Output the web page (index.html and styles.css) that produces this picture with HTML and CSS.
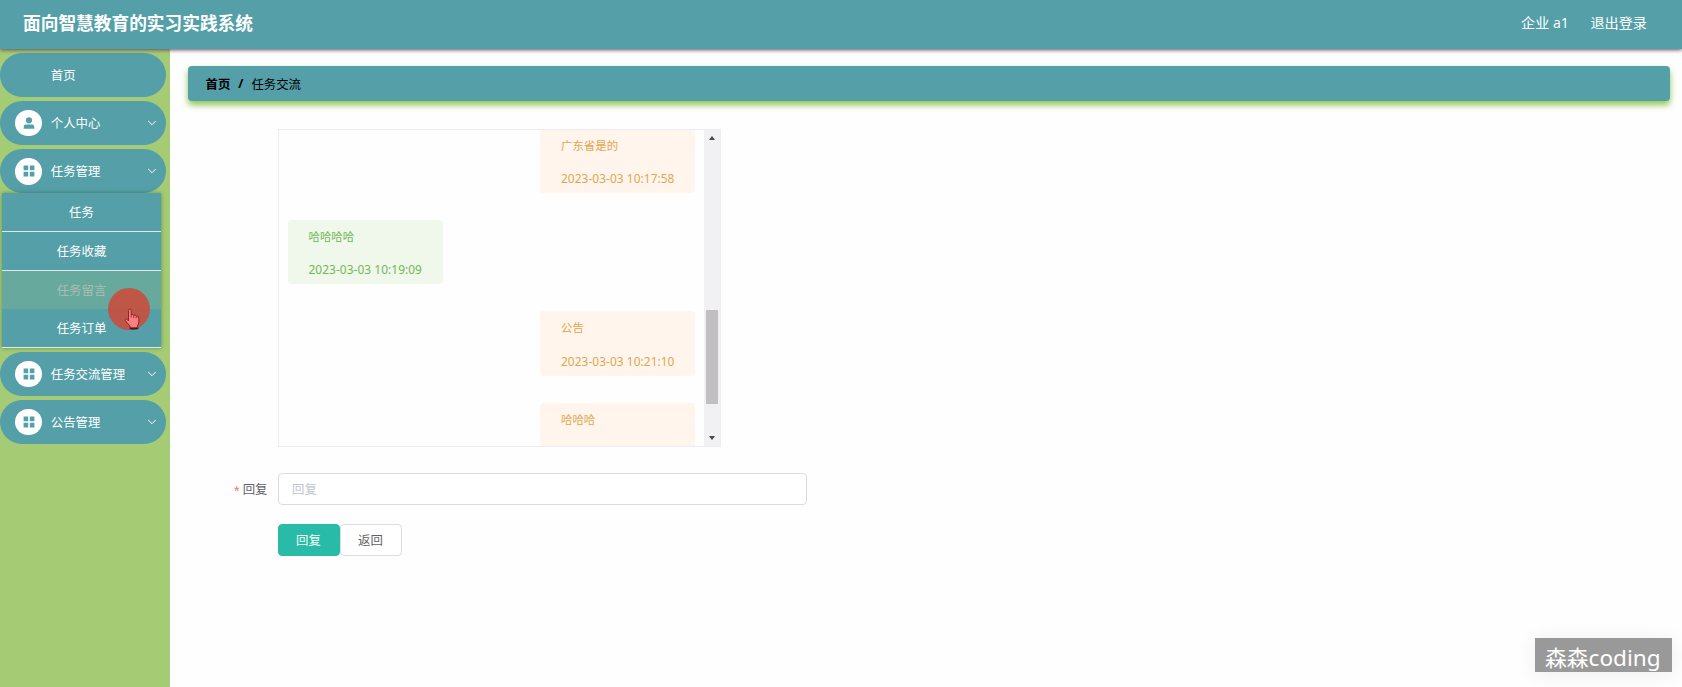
FILE: index.html
```html
<!DOCTYPE html>
<html lang="zh-CN">
<head>
<meta charset="utf-8">
<title>面向智慧教育的实习实践系统</title>
<link rel="stylesheet" href="styles.css">
</head>
<body>
<svg class="defs" width="0" height="0">
  <symbol id="grid" viewBox="0 0 12 12"><path d="M0.6 0.6h4.6v4.6H0.6zM6.8 0.6h4.6v4.6H6.8zM0.6 6.8h4.6v4.6H0.6zM6.8 6.8h4.6v4.6H6.8z"/></symbol>
  <symbol id="user" viewBox="0 0 12 12"><circle cx="6" cy="3.3" r="3.1"/><path d="M0.7 11.7V10Q0.7 7.6 3.1 7.6H8.9Q11.3 7.6 11.3 10V11.7Z"/></symbol>
  <symbol id="down" viewBox="0 0 10 6"><path d="M1.2 0.9L5 4.7L8.8 0.9" fill="none" stroke="currentColor" stroke-width="1"/></symbol>
</svg>
<header class="header">
  <h1 class="title">面向智慧教育的实习实践系统</h1>
  <nav class="account"><span>企业 a1</span><span>退出登录</span></nav>
</header>
<div class="body">
  <aside class="sidebar">
    <div class="item"><span class="label home">首页</span></div>
    <div class="item"><span class="icon"><svg><use href="#user"/></svg></span><span class="label">个人中心</span><svg class="arrow"><use href="#down"/></svg></div>
    <div class="item open"><span class="icon"><svg><use href="#grid"/></svg></span><span class="label">任务管理</span><svg class="arrow"><use href="#down"/></svg></div>
    <ul class="submenu">
      <li>任务</li>
      <li>任务收藏</li>
      <li class="hover">任务留言</li>
      <li>任务订单</li>
    </ul>
    <div class="item"><span class="icon"><svg><use href="#grid"/></svg></span><span class="label">任务交流管理</span><svg class="arrow"><use href="#down"/></svg></div>
    <div class="item"><span class="icon"><svg><use href="#grid"/></svg></span><span class="label">公告管理</span><svg class="arrow"><use href="#down"/></svg></div>
  </aside>
  <main class="main">
    <div class="breadcrumb"><b>首页</b><b class="slash">/</b><span>任务交流</span></div>
    <div class="chat">
      <div class="messages">
        <div class="message mine first"><p>广东省是的</p><p><span class="date">2023-03-03 10:17:58</span></p></div>
        <div class="message other"><p>哈哈哈哈</p><p><span class="date">2023-03-03 10:19:09</span></p></div>
        <div class="message mine"><p>公告</p><p><span class="date">2023-03-03 10:21:10</span></p></div>
        <div class="message mine"><p>哈哈哈</p><p>&nbsp;</p></div>
      </div>
      <div class="scrollbar"><i class="up"></i><i class="thumb"></i><i class="dn"></i></div>
    </div>
    <div class="field"><label><em>*</em>回复</label><div class="input">回复</div></div>
    <div class="buttons"><button class="btn primary">回复</button><button class="btn">返回</button></div>
  </main>
</div>
<div class="pointer">
  <svg width="16" height="22" viewBox="0 0 16 22"><ellipse cx="10" cy="20" rx="4.5" ry="1.6" fill="#2a1a1c"/><path d="M4.5 13V2.4Q4.5 1 5.8 1Q7.2 1 7.2 2.4V6.6Q9 6 9.7 7.2Q11.5 6.6 12.2 8Q14.8 7.6 14.8 10V14Q14.8 16.5 13.4 18V19.8H6.2V18.2L1.4 12.8Q0.6 11.4 1.7 10.8Q2.9 10.4 4.5 13Z" fill="#fa7f80" stroke="#8c2426" stroke-width="1"/><path d="M7.2 6.6V9.5M9.7 7.4V10M12.2 8.2V10.5" stroke="#8c2426" stroke-width=".8"/></svg>
</div>
<div class="watermark">森森<span>coding</span></div>
</body>
</html>
```
FILE: styles.css
```css
* { box-sizing: border-box; }
body {
  margin: 0;
  height: 687px;
  overflow: hidden;
  display: flex;
  flex-direction: column;
  background: #fefefe;
  font-family: "Open Sans", "Noto Sans CJK SC", sans-serif;
  font-size: 12.4px;
  color: #606266;
}
.defs { position: absolute; }
.header {
  flex: none;
  height: 49px;
  padding: 0 35px 3px 23px;
  display: flex;
  align-items: center;
  justify-content: space-between;
  background: #549fa8;
  color: #fff;
  box-shadow: 0 1px 4px #624b5c;
  z-index: 2;
}
.title { margin: 0; font-size: 17.7px; line-height: 26px; font-weight: 700; }
.account { display: flex; gap: 21.5px; font-size: 14.15px; line-height: 20px; }
.body { flex: 1; display: flex; min-height: 0; }
.sidebar {
  flex: none;
  width: 170px;
  padding-top: 4px;
  background: #a5cc74;
}
.item {
  width: 165.5px;
  height: 44px;
  margin-bottom: 4.2px;
  padding: 0 9px 0 15.3px;
  border-radius: 22px;
  display: flex;
  align-items: center;
  background: #549fa8;
  color: #fff;
}
.item.open { margin-bottom: 0; }
.icon {
  width: 26.5px;
  height: 26.5px;
  margin-right: 9px;
  border-radius: 50%;
  background: #fff;
  color: #549fa8;
  display: flex;
  align-items: center;
  justify-content: center;
}
.icon svg { width: 12px; height: 12px; fill: currentColor; }
.label { flex: 1; padding-top: 1px; line-height: 20px; }
.home { padding-left: 35.5px; }
.arrow { width: 10px; height: 6px; }
.submenu {
  list-style: none;
  width: 159px;
  margin: 0 0 4.3px 2px;
  padding: 0;
  box-shadow: 0 0 4px rgba(50, 90, 60, .6);
  color: #fff;
}
.submenu li {
  height: 38.6px;
  line-height: 39px;
  text-align: center;
  background: #549fa8;
  border-bottom: 1.5px solid #dcebea;
}
.submenu .hover { background: #67a99c; border-color: #67a99c; color: #acbdb5; }
.main { flex: 1; padding: 17px 12px 0 18px; }
.breadcrumb {
  height: 35px;
  padding-left: 17.5px;
  display: flex;
  align-items: center;
  border-radius: 4px;
  background: #549fa8;
  box-shadow: 0 4px 6px #91c655;
  color: #000;
}
.slash { margin: 0 8px; }
.chat {
  width: 443px;
  height: 318px;
  margin: 28px 0 0 89.5px;
  display: flex;
  overflow: hidden;
  border: 1px solid #ededf0;
}
.messages {
  flex: 1;
  padding: 0 9px;
  display: flex;
  flex-direction: column;
  gap: 27px;
}
.message {
  flex: none;
  width: 155px;
  height: 64.3px;
  padding-left: 21px;
  border-radius: 4px;
  font-size: 11.45px;
}
.message.first { margin-top: -1.3px; }
.message p { margin: 0; height: 32.3px; line-height: 34.6px; white-space: nowrap; }
.mine { align-self: flex-end; background: #fff5ec; color: #e3a550; }
.other { background: #f0f7eb; color: #70b956; }
.date { font-family: "Noto Sans", sans-serif; font-size: 11.9px; letter-spacing: .06px; }
.scrollbar {
  width: 15.5px;
  display: flex;
  flex-direction: column;
  align-items: center;
  background: #f1f0f3;
}
.up, .dn { border: 3.5px solid transparent; }
.up { margin-top: 3px; border-bottom: 4px solid #45454a; border-top-width: 3px; }
.thumb { width: 12px; height: 94px; margin-top: 170px; background: #c1bfc2; }
.dn { margin-top: auto; margin-bottom: 3px; border-top: 4px solid #45454a; }
.field { display: flex; margin-top: 26px; }
.field label { width: 89.5px; padding-right: 10px; text-align: right; line-height: 33px; }
.field em { margin-right: 3px; font-size: 11px; font-style: normal; color: #f56c6c; }
.input {
  width: 529.5px;
  height: 32px;
  padding-left: 13.5px;
  border: 1px solid #dcdcde;
  border-radius: 4px;
  background: #fff;
  line-height: 31px;
  color: #c0c4cc;
}
.buttons { display: flex; margin: 18px 0 0 89.5px; }
.btn {
  width: 62px;
  height: 32px;
  padding: 0;
  border: 1px solid #dcdcde;
  border-radius: 4px;
  background: #fff;
  font: inherit;
  color: #606266;
}
.primary { background: #28bba8; border-color: #28bba8; color: #fff; }
.pointer {
  position: absolute;
  left: 108px;
  top: 287.5px;
  width: 42px;
  height: 42px;
  border-radius: 50%;
  background: rgba(204, 75, 58, .88);
  z-index: 3;
}
.pointer svg { position: absolute; left: 16px; top: 20.5px; }
.watermark {
  position: absolute;
  left: 1535px;
  top: 638px;
  width: 137px;
  height: 34px;
  padding-left: 10px;
  background: #999;
  box-shadow: 0 2px 22px rgba(0, 0, 0, .07);
  color: #fff;
  font-family: "Noto Sans", "Noto Sans CJK SC", sans-serif;
  font-size: 21.8px;
  line-height: 39px;
  white-space: nowrap;
}
.watermark span { font-size: 22.6px; }
```
